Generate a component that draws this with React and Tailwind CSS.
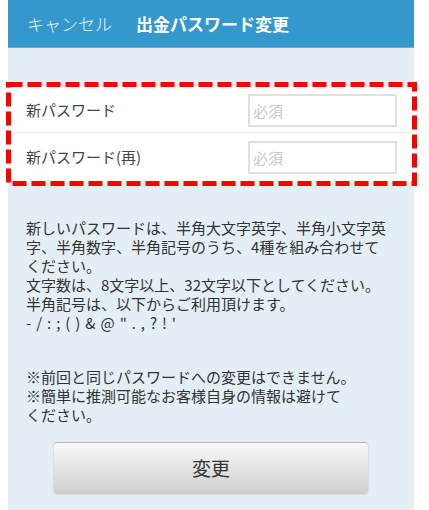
import React from 'react';

const FONT = "font-['Noto_Sans_CJK_JP','Noto_Sans',sans-serif]";

const PasswordRow = ({ label, withDivider }) => (
  <div
    className={`flex items-center pl-[18px] ${
      withDivider ? 'pt-[8px] pb-[5px] border-b border-[#ececec]' : 'pt-[8px] pb-[8px]'
    }`}
  >
    <span className="w-[222px] shrink-0 text-[15px] text-[#444]">{label}</span>
    <input
      type="password"
      placeholder="必須"
      className="h-[33px] w-[149px] shrink-0 border-2 border-[#e0e0e0] bg-white px-[3px] text-[15px] placeholder:text-[#c8c8c8] outline-none"
    />
  </div>
);

const RedFrame = () => (
  <svg
    className="pointer-events-none absolute -left-[2px] -top-[4px]"
    width="411"
    height="104"
    viewBox="0 0 411 104"
  >
    <rect
      x="2.5"
      y="2.5"
      width="406"
      height="99"
      fill="none"
      stroke="#ff0000"
      strokeWidth="5"
      strokeDasharray="14 5"
    />
  </svg>
);

export default function App() {
  return (
    <div className={`h-[510px] overflow-hidden bg-white ${FONT}`}>
      <div className="ml-[8px] h-[510px] w-[406px] bg-[#e4eef5]">
        <header className="flex h-[48px] items-center border-b border-[#6aaed6] bg-[#3598cc] pl-[19px] text-[17px] text-white">
          <button className="font-light text-[#eef6fb]">キャンセル</button>
          <h1 className="ml-[24px] font-bold">出金パスワード変更</h1>
        </header>

        <div className="relative mt-[38px] bg-white">
          <PasswordRow label="新パスワード" withDivider />
          <PasswordRow label="新パスワード(再)" />
          <RedFrame />
        </div>

        <div className="pl-[18px] pt-[36px] text-[15px] leading-[19px] text-[#333]">
          <p>
            新しいパスワードは、半角大文字英字、半角小文字英
            <br />
            字、半角数字、半角記号のうち、4種を組み合わせて
            <br />
            ください。
            <br />
            文字数は、8文字以上、32文字以下としてください。
            <br />
            半角記号は、以下からご利用頂けます。
            <br />
            <span className="[word-spacing:1.6px]">- / : ; ( ) &amp; @ " . , ? ! '</span>
          </p>
          <p className="mt-[35px]">
            ※前回と同じパスワードへの変更はできません。
            <br />
            ※簡単に推測可能なお客様自身の情報は避けて
            <br />
            ください。
          </p>
        </div>

        <button className="mx-auto mt-[18px] flex h-[51px] w-[314px] items-center justify-center rounded-[3px] border-t border-[#b4b4b4] bg-gradient-to-b from-[#f9f9f9] to-[#cfcfcf] text-[19px] text-[#333] shadow-[0_1px_2px_rgba(0,0,0,0.2)]">
          変更
        </button>
      </div>
    </div>
  );
}
